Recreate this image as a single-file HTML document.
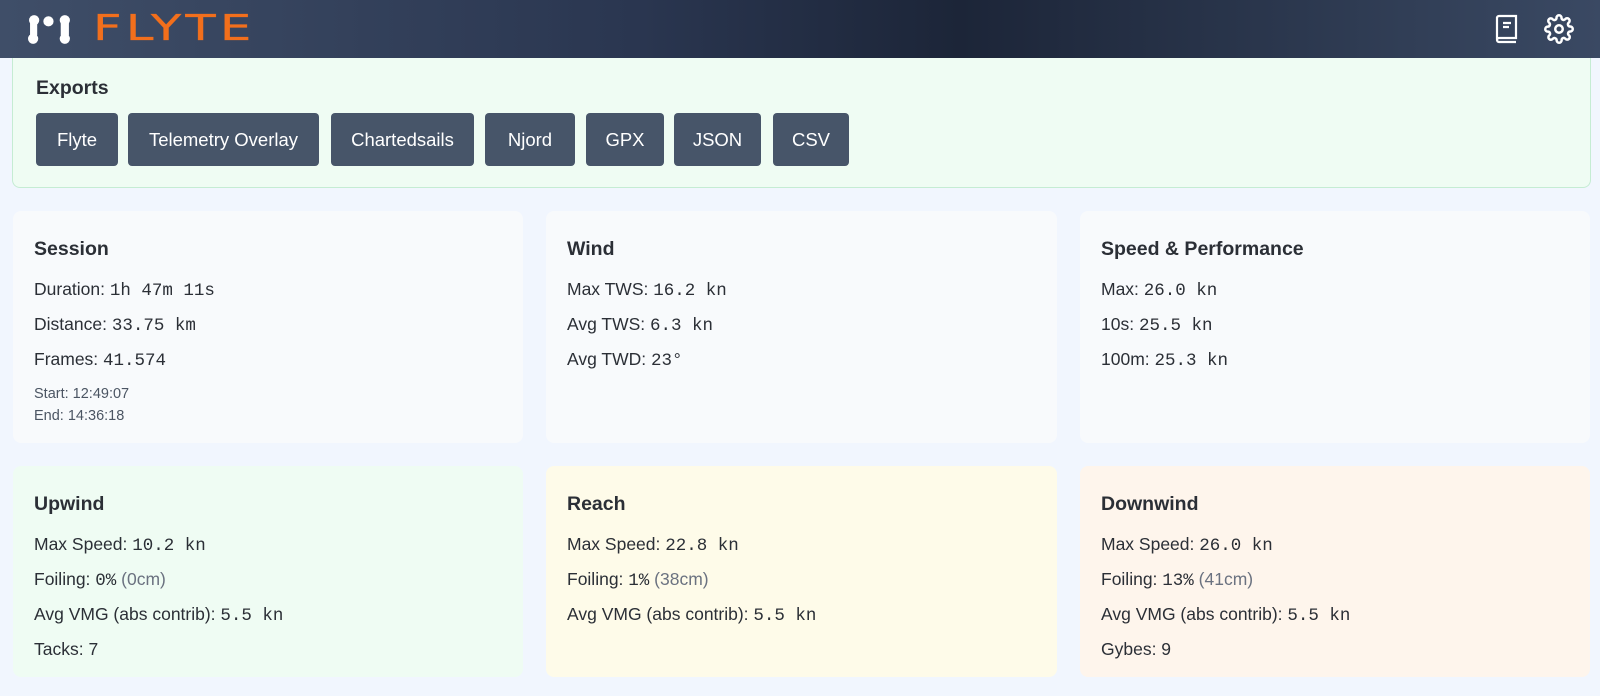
<!DOCTYPE html><html><head><style>
*{box-sizing:border-box;margin:0;padding:0}
body{width:1600px;height:696px;background:#f1f6fe;font-family:"Liberation Sans",sans-serif;color:#1f2937;overflow:hidden;position:relative}
.hdr{position:absolute;left:0;top:0;width:1600px;height:58px;background:linear-gradient(90deg,#3f4e68 0%,#2a3650 40%,#1c2538 60%,#3a4963 100%)}
.logo{position:absolute;left:93px;top:8px;font-size:36px;letter-spacing:3px;color:#f26f1c;font-family:"DejaVu Sans",sans-serif;transform:scaleX(1.38);transform-origin:left;-webkit-text-stroke:0.3px #f26f1c}
.exp{position:absolute;left:12px;top:58px;width:1579px;height:130px;background:#effcf3;border:1px solid #c5ecd3;border-top:none;border-radius:0 0 8px 8px}
.exp h3{position:absolute;left:23px;top:19px;font-size:19.5px;font-weight:bold;color:#2b2f36}
.btn{position:absolute;top:55px;height:53px;background:#475569;color:#fff;border-radius:4px;font-size:18.5px;display:flex;align-items:center;justify-content:center}
.card{position:absolute;border-radius:8px;padding:27px 21px}
.card h4{font-size:19.5px;font-weight:bold;color:#2b2f36;margin-bottom:12px}
.card p{font-size:17.5px;line-height:33px;color:#2b2f36}
.m{font-family:"Liberation Mono",monospace;font-size:17.5px}
.g{color:#6b7280}
.s{font-size:14.5px;color:#4b5563;line-height:22px;margin-top:5px}
</style></head><body>
<div class="hdr">
<svg style="position:absolute;left:28px;top:14px" width="45" height="31" viewBox="0 0 44 30"><g fill="#fff"><circle cx="6" cy="6" r="5"/><rect x="2" y="5" width="7" height="18" rx="3"/><circle cx="5" cy="24" r="5"/><circle cx="20" cy="7" r="5"/><circle cx="36" cy="6" r="5"/><rect x="32" y="5" width="8" height="18" rx="3"/><circle cx="36" cy="24" r="5"/></g></svg>
<div class="logo">FLYTE</div>
<svg style="position:absolute;left:1494px;top:14px" width="26" height="30" viewBox="0 0 26 30" fill="none" stroke="#fff" stroke-width="2.2"><path d="M3 25V4a2 2 0 0 1 2-2h17v22H5a2 2 0 0 0 0 4h17"/><path d="M9 9h8M9 13h6"/></svg>
<svg style="position:absolute;left:1544px;top:14px" width="30" height="30" viewBox="0 0 24 24" fill="none" stroke="#fff" stroke-width="2"><circle cx="12" cy="12" r="3"/><path d="M19.4 15a1.7 1.7 0 0 0 .3 1.8l.1.1a2 2 0 1 1-2.8 2.8l-.1-.1a1.7 1.7 0 0 0-1.8-.3 1.7 1.7 0 0 0-1 1.5V21a2 2 0 0 1-4 0v-.1a1.7 1.7 0 0 0-1.100-1.5 1.7 1.7 0 0 0-1.8.3l-.1.1a2 2 0 1 1-2.8-2.8l.1-.1a1.7 1.7 0 0 0 .3-1.8 1.7 1.7 0 0 0-1.5-1H3a2 2 0 0 1 0-4h.1a1.7 1.7 0 0 0 1.5-1.1 1.7 1.7 0 0 0-.3-1.8l-.1-.1a2 2 0 1 1 2.8-2.8l.1.1a1.7 1.7 0 0 0 1.8.3H9a1.7 1.7 0 0 0 1-1.5V3a2 2 0 0 1 4 0v.1a1.7 1.7 0 0 0 1 1.5 1.7 1.7 0 0 0 1.8-.3l.1-.1a2 2 0 1 1 2.8 2.8l-.1.1a1.7 1.7 0 0 0-.3 1.8V9a1.7 1.7 0 0 0 1.5 1H21a2 2 0 0 1 0 4h-.1a1.7 1.7 0 0 0-1.5 1z"/></svg>
</div>
<div class="exp"><h3>Exports</h3>
<div class="btn" style="left:23px;width:82px">Flyte</div>
<div class="btn" style="left:115px;width:191px">Telemetry Overlay</div>
<div class="btn" style="left:318px;width:143px">Chartedsails</div>
<div class="btn" style="left:472px;width:90px">Njord</div>
<div class="btn" style="left:573px;width:78px">GPX</div>
<div class="btn" style="left:661px;width:87px">JSON</div>
<div class="btn" style="left:760px;width:76px">CSV</div>
</div>
<div class="card" style="left:13px;top:211px;width:510px;height:232px;background:#f8fafc"><h4>Session</h4>
<p>Duration: <span class="m">1h 47m 11s</span><br>Distance: <span class="m">33.75 km</span><br>Frames: <span class="m">41.574</span></p>
<div class="s">Start: 12:49:07<br>End: 14:36:18</div></div>
<div class="card" style="left:546px;top:211px;width:511px;height:232px;background:#f8fafc"><h4>Wind</h4>
<p>Max TWS: <span class="m">16.2 kn</span><br>Avg TWS: <span class="m">6.3 kn</span><br>Avg TWD: <span class="m">23°</span></p></div>
<div class="card" style="left:1080px;top:211px;width:510px;height:232px;background:#f8fafc"><h4>Speed &amp; Performance</h4>
<p>Max: <span class="m">26.0 kn</span><br>10s: <span class="m">25.5 kn</span><br>100m: <span class="m">25.3 kn</span></p></div>
<div class="card" style="left:13px;top:466px;width:510px;height:211px;background:#effcf3"><h4>Upwind</h4>
<p>Max Speed: <span class="m">10.2 kn</span><br>Foiling: <span class="m">0%</span> <span class="g">(0cm)</span><br>Avg VMG (abs contrib): <span class="m">5.5 kn</span><br>Tacks: 7</p></div>
<div class="card" style="left:546px;top:466px;width:511px;height:211px;background:#fefbe9"><h4>Reach</h4>
<p>Max Speed: <span class="m">22.8 kn</span><br>Foiling: <span class="m">1%</span> <span class="g">(38cm)</span><br>Avg VMG (abs contrib): <span class="m">5.5 kn</span></p></div>
<div class="card" style="left:1080px;top:466px;width:510px;height:211px;background:#fef5ec"><h4>Downwind</h4>
<p>Max Speed: <span class="m">26.0 kn</span><br>Foiling: <span class="m">13%</span> <span class="g">(41cm)</span><br>Avg VMG (abs contrib): <span class="m">5.5 kn</span><br>Gybes: 9</p></div>
</body></html>
